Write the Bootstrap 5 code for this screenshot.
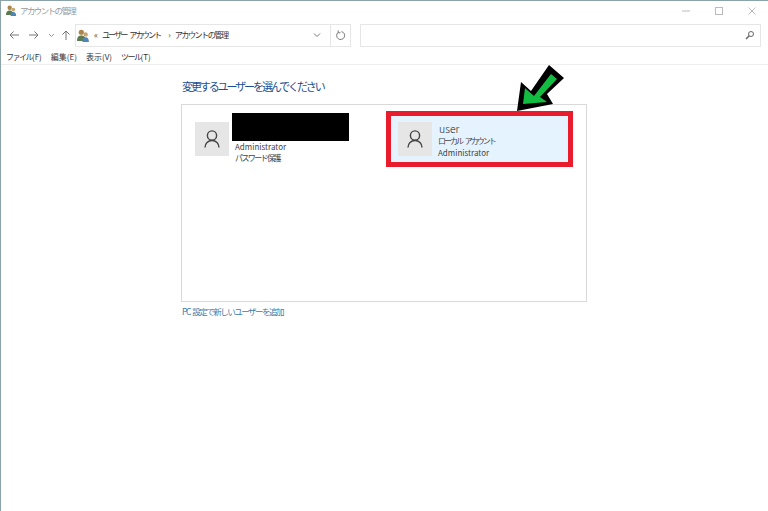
<!DOCTYPE html>
<html lang="ja">
<head>
    <meta charset="UTF-8">
    <meta name="viewport" content="width=device-width, initial-scale=1.0">
    <title>アカウントの管理</title>
    <link href="https://cdn.jsdelivr.net/npm/bootstrap@5.3.0/dist/css/bootstrap.min.css" rel="stylesheet">
    <style>
        html, body { height: 100%; }
        body {
            font-family: "Noto Sans CJK JP", "Noto Sans", sans-serif;
            font-size: 8.5px;
            line-height: 1.2;
            color: #444;
            background: #fff;
            overflow: hidden;
        }
        .jp-tight { letter-spacing: -1.6px; }
        .jp-words { letter-spacing: -2px; word-spacing: 3px; }
        .win-frame {
            position: relative;
            height: 511px;
            border-top: 1px solid #8ba3a8;
            border-left: 1px solid #8ba3a8;
        }
        .title-row { height: 22px; padding-left: 5px; padding-bottom: 3px; color: #999; }
        .title-text { font-size: 8.5px; margin-left: 3px; }
        .win-btn { width: 33px; display: flex; justify-content: center; }
        .addr-row { height: 24px; padding-right: 7px; }
        .nav-arrows { width: 74px; padding-left: 8px; color: #777; }
        .addr-box {
            width: 276px;
            height: 23px;
            border: 1px solid #e6e6e6;
            padding-left: 1px;
            color: #333;
            font-size: 8.2px;
        }
        .refresh-cell {
            width: 20px;
            height: 21px;
            border-left: 1px solid #e6e6e6;
        }
        .search-box {
            height: 23px;
            flex: 1;
            margin-left: 9px;
            border: 1px solid #e6e6e6;
            padding-right: 5px;
        }
        .menu-row {
            height: 16px;
            margin-top: 2px;
            padding-left: 5px;
            gap: 9px;
            color: #333;
            border-bottom: 1px solid #eee;
            font-size: 8px;
        }
        .kana-tight { letter-spacing: -1.5px; }
        .main-pane { width: 406px; margin-left: 180px; padding-top: 14px; }
        .pane-title { font-size: 11px; font-weight: 400; color: #1b4f8f; margin: 0 0 10px 1px; line-height: 15px; letter-spacing: -2.1px; }
        .user-panel {
            height: 198px;
            border: 1px solid #d9d9d9;
            padding: 6px 13px 0 13px;
        }
        .user-tile { height: 56px; }
        .tile-plain { width: 191px; padding-top: 11px; }
        .tile-picked {
            width: 187px;
            background: #e5f3ff;
            border: 5px solid #e81c2c;
            padding: 6px 7px;
        }
        .avatar-box {
            width: 34px;
            height: 34px;
            background: #e6e6e6;
            flex: none;
        }
        .tile-text { margin: 1px 0 0 6px; color: #444; line-height: 12px; font-size: 8px; }
        .tile-name { font-size: 10.5px; color: #222; line-height: 12px; font-weight: 300; margin-left: 1px; }
        .black-out {
            position: absolute;
            left: 231px;
            top: 112px;
            width: 117px;
            height: 28px;
            background: #000;
        }
        .plain-text { margin: 19px 0 0 6px; line-height: 11px; }
        .add-link { display: block; margin: 4px 0 0 1px; color: #3c7ba8; text-decoration: none; font-size: 8.5px; letter-spacing: -1.5px; word-spacing: 2px; }
        .arrow-mark { position: absolute; left: 0; top: 0; }
    </style>
</head>
<body>
    <div class="win-frame">
        <div class="title-row d-flex align-items-center">
            <svg width="11" height="11" viewBox="0 0 12 12">
                <circle cx="4" cy="3" r="2.4" fill="#a8854a"/>
                <path d="M0 11c0-4 2-5 4-5s4 1 4 5z" fill="#5c7a52"/>
                <circle cx="8" cy="5" r="2" fill="#c9a468"/>
                <path d="M5 12c0-3 1-4.500 3-4.500s3 1.500 3 4.500z" fill="#4c86b8"/>
            </svg>
            <span class="title-text jp-tight">アカウントの管理</span>
            <div class="ms-auto d-flex">
                <div class="win-btn"><svg width="8" height="8" viewBox="0 0 8 8"><path d="M0 4h8" stroke="#bbb"/></svg></div>
                <div class="win-btn"><svg width="8" height="8" viewBox="0 0 8 8"><rect x=".5" y=".5" width="7" height="7" fill="none" stroke="#bbb"/></svg></div>
                <div class="win-btn"><svg width="8" height="8" viewBox="0 0 8 8"><path d="M.5.5l7 7M7.500.5l-7 7" stroke="#bbb" fill="none"/></svg></div>
            </div>
        </div>

        <div class="addr-row d-flex align-items-center">
            <div class="nav-arrows d-flex align-items-center justify-content-between">
                <svg width="10" height="10" viewBox="0 0 10 10"><path d="M10 5H1M4.500 1.500 1 5l3.500 3.500" fill="none" stroke="#777"/></svg>
                <svg class="ms-2" width="10" height="10" viewBox="0 0 10 10"><path d="M0 5h9M5.500 1.500 9 5 5.500 8.500" fill="none" stroke="#777"/></svg>
                <svg class="ms-2" width="7" height="7" viewBox="0 0 7 7"><path d="M1 2l2.500 2.500L6 2" fill="none" stroke="#999"/></svg>
                <svg class="ms-1 me-1" width="10" height="10" viewBox="0 0 10 10"><path d="M5 10V1M1.500 4.500 5 1l3.500 3.500" fill="none" stroke="#777"/></svg>
            </div>
            <div class="addr-box d-flex align-items-center">
                <svg width="13" height="13" viewBox="0 0 12 12">
                    <circle cx="4" cy="3" r="2.4" fill="#a8854a"/>
                    <path d="M0 11c0-4 2-5 4-5s4 1 4 5z" fill="#5c7a52"/>
                    <circle cx="8" cy="5" r="2" fill="#c9a468"/>
                    <path d="M5 12c0-3 1-4.500 3-4.500s3 1.500 3 4.500z" fill="#4c86b8"/>
                </svg>
                <span class="ms-1 me-1">«</span>
                <span class="jp-words">ユーザー アカウント</span>
                <span class="ms-2 me-1">›</span>
                <span class="jp-tight">アカウントの管理</span>
                <div class="ms-auto d-flex align-items-center">
                    <svg class="me-2" width="10" height="10" viewBox="0 0 10 10"><path d="M2 3.500 5 6.500l3-3" fill="none" stroke="#777"/></svg>
                    <div class="refresh-cell d-flex align-items-center justify-content-center">
                        <svg width="11" height="11" viewBox="0 0 11 11"><path d="M3 2.500A4 4 0 1 0 6.500 1.600M3.200 .5v2.300h2.300" fill="none" stroke="#777"/></svg>
                    </div>
                </div>
            </div>
            <div class="search-box d-flex align-items-center justify-content-end">
                <svg width="10" height="10" viewBox="0 0 10 10"><circle cx="6" cy="4" r="2.500" fill="none" stroke="#666"/><path d="M4.200 5.800 1 9" stroke="#666" stroke-width="1.500"/></svg>
            </div>
        </div>

        <div class="menu-row d-flex align-items-center">
            <span><span class="kana-tight">ファイル</span>(F)</span>
            <span>編集(E)</span>
            <span>表示(V)</span>
            <span><span class="kana-tight">ツール</span>(T)</span>
        </div>

        <div class="main-pane">
            <h1 class="pane-title">変更するユーザーを選んでください</h1>
            <div class="user-panel d-flex">
                <div class="user-tile tile-plain d-flex">
                    <div class="avatar-box d-flex align-items-center justify-content-center">
                        <svg width="18" height="18" viewBox="0 0 18 18"><circle cx="9" cy="5.500" r="4.600" fill="none" stroke="#444" stroke-width="1.400"/><path d="M2 17.500c0-4 3-7 7-7s7 3 7 7" fill="none" stroke="#444" stroke-width="1.400"/></svg>
                    </div>
                    <div class="tile-text plain-text">
                        <div>Administrator</div>
                        <div class="jp-tight">パスワード保護</div>
                    </div>
                </div>
                <div class="user-tile tile-picked d-flex">
                    <div class="avatar-box d-flex align-items-center justify-content-center">
                        <svg width="18" height="18" viewBox="0 0 18 18"><circle cx="9" cy="5.500" r="4.600" fill="none" stroke="#444" stroke-width="1.400"/><path d="M2 17.500c0-4 3-7 7-7s7 3 7 7" fill="none" stroke="#444" stroke-width="1.400"/></svg>
                    </div>
                    <div class="tile-text">
                        <div class="tile-name">user</div>
                        <div class="jp-words">ローカル アカウント</div>
                        <div>Administrator</div>
                    </div>
                </div>
            </div>
            <a class="add-link" href="#">PC 設定で新しいユーザーを追加</a>
        </div>

        <div class="black-out"></div>
        <svg class="arrow-mark" width="768" height="511" viewBox="0 0 768 511">
            <polygon points="516,110 520,81 530,90 548,64 563,77 546,93 552,103" fill="#000"/>
            <polygon points="522,103 524,87 533,95 550,73 556,78 539,96 546,101" fill="#12bc40"/>
        </svg>
    </div>

    <script src="https://cdn.jsdelivr.net/npm/bootstrap@5.3.0/dist/js/bootstrap.bundle.min.js"></script>
</body>
</html>
